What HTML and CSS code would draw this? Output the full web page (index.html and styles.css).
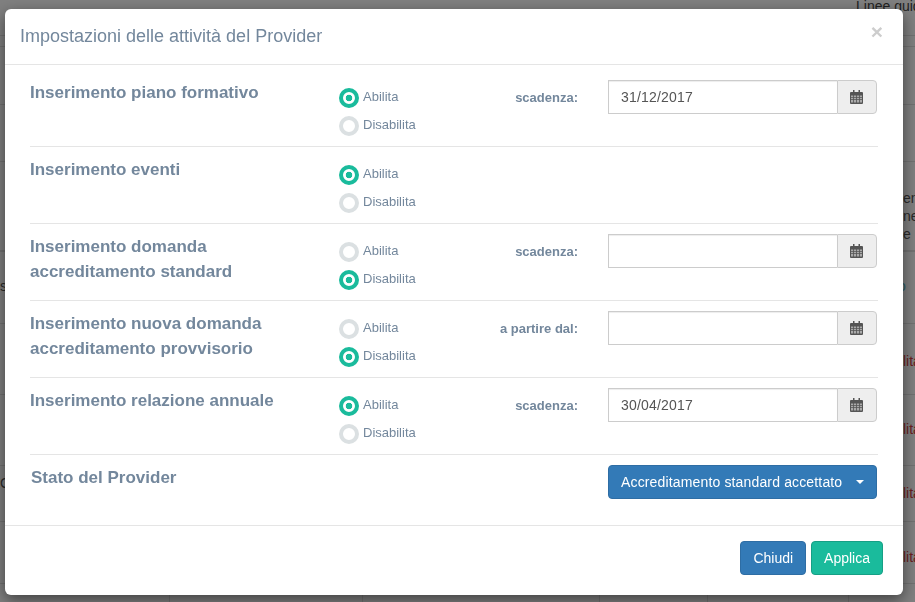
FILE: index.html
```html
<!DOCTYPE html>
<html lang="it">
<head>
<meta charset="utf-8">
<title>Impostazioni</title>
<link rel="stylesheet" href="styles.css">
</head>
<body>
<div class="page">
  <div class="bg-row h36"><span class="bg-guide">Linee guida</span></div>
  <div class="bg-row h11"></div>
  <div class="bg-row h58"></div>
  <div class="bg-row h57"></div>
  <div class="bg-row h90 thick"><span class="bg-side bg-multi">ena<br>ne<br>e</span></div>
  <div class="bg-row h72"><span class="bg-left t1">so</span><span class="bg-side t1 teal">o</span></div>
  <div class="bg-row h71"><span class="bg-side red t2">lita</span></div>
  <div class="bg-row h71"><span class="bg-side red t5">lita</span></div>
  <div class="bg-row h56"><span class="bg-left t3">C</span><span class="bg-side red t6">lita</span></div>
  <div class="bg-row h62"><span class="bg-side red t4">lita</span></div>
  <div class="bg-cells"><i></i><i></i><i></i><i></i><i></i></div>
</div>

<div class="overlay">
  <div class="modal">
    <header class="modal-head">
      <h4 class="modal-title">Impostazioni delle attività del Provider</h4>
      <span class="close">×</span>
    </header>
    <div class="modal-body">

      <section class="row">
        <div class="row-label">Inserimento piano formativo</div>
        <div class="radios">
          <label class="radio"><input type="radio" name="r1" checked>Abilita</label>
          <label class="radio"><input type="radio" name="r1">Disabilita</label>
        </div>
        <div class="date-label">scadenza:</div>
        <div class="date-group">
          <input class="date-input" type="text" value="31/12/2017">
          <span class="date-addon"><svg class="cal" viewBox="0 0 13 14"><use href="#cal"/></svg></span>
        </div>
      </section>

      <section class="row">
        <div class="row-label">Inserimento eventi</div>
        <div class="radios">
          <label class="radio"><input type="radio" name="r2" checked>Abilita</label>
          <label class="radio"><input type="radio" name="r2">Disabilita</label>
        </div>
      </section>

      <section class="row">
        <div class="row-label">Inserimento domanda accreditamento standard</div>
        <div class="radios">
          <label class="radio"><input type="radio" name="r3">Abilita</label>
          <label class="radio"><input type="radio" name="r3" checked>Disabilita</label>
        </div>
        <div class="date-label">scadenza:</div>
        <div class="date-group">
          <input class="date-input" type="text" value="">
          <span class="date-addon"><svg class="cal" viewBox="0 0 13 14"><use href="#cal"/></svg></span>
        </div>
      </section>

      <section class="row">
        <div class="row-label">Inserimento nuova domanda accreditamento provvisorio</div>
        <div class="radios">
          <label class="radio"><input type="radio" name="r4">Abilita</label>
          <label class="radio"><input type="radio" name="r4" checked>Disabilita</label>
        </div>
        <div class="date-label">a partire dal:</div>
        <div class="date-group">
          <input class="date-input" type="text" value="">
          <span class="date-addon"><svg class="cal" viewBox="0 0 13 14"><use href="#cal"/></svg></span>
        </div>
      </section>

      <section class="row">
        <div class="row-label">Inserimento relazione annuale</div>
        <div class="radios">
          <label class="radio"><input type="radio" name="r5" checked>Abilita</label>
          <label class="radio"><input type="radio" name="r5">Disabilita</label>
        </div>
        <div class="date-label">scadenza:</div>
        <div class="date-group">
          <input class="date-input" type="text" value="30/04/2017">
          <span class="date-addon"><svg class="cal" viewBox="0 0 13 14"><use href="#cal"/></svg></span>
        </div>
      </section>

      <section class="row row-last">
        <div class="row-label state-label">Stato del Provider</div>
        <button class="btn btn-blue state-btn" type="button">Accreditamento standard accettato<span class="caret"></span></button>
      </section>

    </div>
    <footer class="modal-foot">
      <button class="btn btn-blue" type="button">Chiudi</button>
      <button class="btn btn-green" type="button">Applica</button>
    </footer>
  </div>
</div>

<svg class="defs" width="0" height="0" aria-hidden="true">
  <symbol id="cal" viewBox="0 0 13 14">
    <path fill="#555" d="M3 0h1.500v2H8.500V0H10v2h2a1 1 0 0 1 1 1v10a1 1 0 0 1-1 1H1a1 1 0 0 1-1-1V3a1 1 0 0 1 1-1h2z"/>
    <path fill="#aaa" d="M1 5.500h2V7H1zM3.800 5.500h2.300V7H3.800zM6.900 5.500h2.300V7H6.900zM10 5.500h2V7h-2zM1 7.800h2v1.500H1zM3.800 7.800h2.300v1.500H3.800zM6.900 7.800h2.300v1.500H6.900zM10 7.800h2v1.500h-2zM1 10.100h2V12.500H1zM3.800 10.100h2.300V12.500H3.800zM6.900 10.100h2.300V12.500H6.900zM10 10.100h2V12.500h-2z"/>
  </symbol>
</svg>
</body>
</html>
```
FILE: styles.css
```css
* { box-sizing: border-box; }

html, body {
  margin: 0;
  height: 100%;
  overflow: hidden;
}

body {
  font-family: "Liberation Sans", Arial, sans-serif;
  font-size: 13px;
  color: #73879c;
  background: #7f7f7f;
}

.page {
  height: 602px;
  overflow: hidden;
  background: #808080;
  color: #2b2b2b;
  font-size: 14px;
}

.bg-row {
  display: flex;
  justify-content: space-between;
  border-bottom: 1px solid #727272;
  position: relative;
}

.h36 { height: 36px; }
.h11 { height: 11px; }
.h58 { height: 58px; }
.h57 { height: 57px; }
.h90 { height: 90px; }
.h72 { height: 72px; }
.h71 { height: 71px; }
.h56 { height: 56px; }
.h62 { height: 62px; }

.thick { border-bottom-width: 2px; }

.bg-guide {
  margin-left: 856px;
  margin-top: -2px;
  white-space: nowrap;
  color: #222;
}

.bg-side {
  margin-left: auto;
  width: 12px;
  white-space: nowrap;
  overflow: hidden;
}

.bg-left { white-space: nowrap; }

.bg-multi { padding-top: 27px; line-height: 18px; }
.t1 { padding-top: 26px; }
.t2 { padding-top: 29px; }
.t3 { padding-top: 9px; }
.t4 { padding-top: 27px; }
.t5 { padding-top: 26px; }
.t6 { padding-top: 19px; }
.red { color: #6b2020; }
.teal { color: #2f5f66; text-indent: -5px; }

.bg-cells {
  display: grid;
  grid-template-columns: 170px 193px 237px 108px 141px;
  height: 20px;
}

.bg-cells i { border-right: 1px solid #727272; }

.overlay {
  position: fixed;
  inset: 0;
  padding: 9px 0 0 5px;
}

.modal {
  width: 898px;
  height: 586px;
  background: #fff;
  border-radius: 6px;
  box-shadow: 0 5px 15px rgba(0, 0, 0, .5);
  display: flex;
  flex-direction: column;
}

.modal-head {
  height: 56px;
  flex: none;
  padding: 15px;
  border-bottom: 1px solid #e5e5e5;
  display: flex;
  justify-content: space-between;
  align-items: flex-start;
}

.modal-title {
  margin: 0;
  font-size: 18px;
  line-height: 25px;
  font-weight: 400;
  color: #73879c;
}

.close {
  font-size: 21px;
  font-weight: 700;
  line-height: 15px;
  color: #cdcdcd;
  margin-right: 5px;
}

.modal-body {
  flex: 1;
  padding: 5px 25px 0;
}

.row {
  height: 77px;
  border-bottom: 1px solid #e5e5e5;
  display: grid;
  grid-template-columns: 309px 151px 88px 269px;
  align-items: start;
  padding-right: 1px;
}

.row-last {
  height: 70px;
  border-bottom: 0;
}

.row-label {
  font-size: 17px;
  font-weight: 700;
  line-height: 25px;
  padding-top: 10px;
  color: #73879c;
  width: 265px;
}

.state-label {
  grid-column: 1 / 4;
  padding-left: 1px;
  width: auto;
}

.radios {
  padding-top: 18px;
  display: flex;
  flex-direction: column;
  gap: 8px;
}

.radio {
  display: flex;
  align-items: flex-start;
  height: 20px;
  font-size: 13px;
  line-height: 18px;
  color: #73879c;
}

.radio input {
  appearance: none;
  margin: 0 4px 0 0;
  width: 20px;
  height: 20px;
  border-radius: 50%;
  border: 4px solid #dbe0e2;
  background: #fff;
  flex: none;
}

.radio input:checked {
  border-color: #1abb9c;
  background: radial-gradient(circle, #1abb9c 0 3px, #fff 3.6px);
}

.date-label {
  grid-column: 3;
  font-size: 13px;
  font-weight: 700;
  line-height: 16px;
  padding-top: 20px;
  text-align: right;
  white-space: nowrap;
  color: #73879c;
  margin-left: -40px;
}

.date-group {
  grid-column: 4;
  margin-left: 30px;
  width: 269px;
  margin-top: 10px;
  height: 34px;
  display: flex;
}

.date-input {
  flex: 1;
  min-width: 0;
  height: 34px;
  padding: 6px 12px;
  border: 1px solid #ccc;
  border-right: 0;
  font: 14px "Liberation Sans", Arial, sans-serif;
  letter-spacing: .2px;
  color: #555;
  box-shadow: inset 0 1px 1px rgba(0, 0, 0, .075);
  outline: 0;
}

.date-addon {
  width: 40px;
  flex: none;
  border: 1px solid #ccc;
  border-radius: 0 4px 4px 0;
  background: #eee;
  display: flex;
  align-items: center;
  justify-content: center;
  padding-right: 2px;
}

.cal {
  width: 13px;
  height: 14px;
  display: block;
}

.defs { position: absolute; }

.btn {
  height: 34px;
  padding: 6px 12px;
  border-radius: 4px;
  font: 14px/20px "Liberation Sans", Arial, sans-serif;
  color: #fff;
  border: 1px solid transparent;
  white-space: nowrap;
}

.btn-blue {
  background: #337ab7;
  border-color: #2e6da4;
}

.btn-green {
  background: #1abb9c;
  border-color: #169f85;
}

.state-btn {
  grid-column: 4;
  width: 269px;
  margin-left: 30px;
  margin-top: 10px;
  display: flex;
  align-items: center;
  letter-spacing: .15px;
}

.caret {
  margin-left: 14px;
  width: 0;
  height: 0;
  border-top: 4px solid #fff;
  border-left: 4px solid transparent;
  border-right: 4px solid transparent;
}

.modal-foot {
  height: 71px;
  flex: none;
  border-top: 1px solid #e5e5e5;
  padding: 15px 20px 0 0;
  display: flex;
  justify-content: flex-end;
  gap: 5px;
}
```
